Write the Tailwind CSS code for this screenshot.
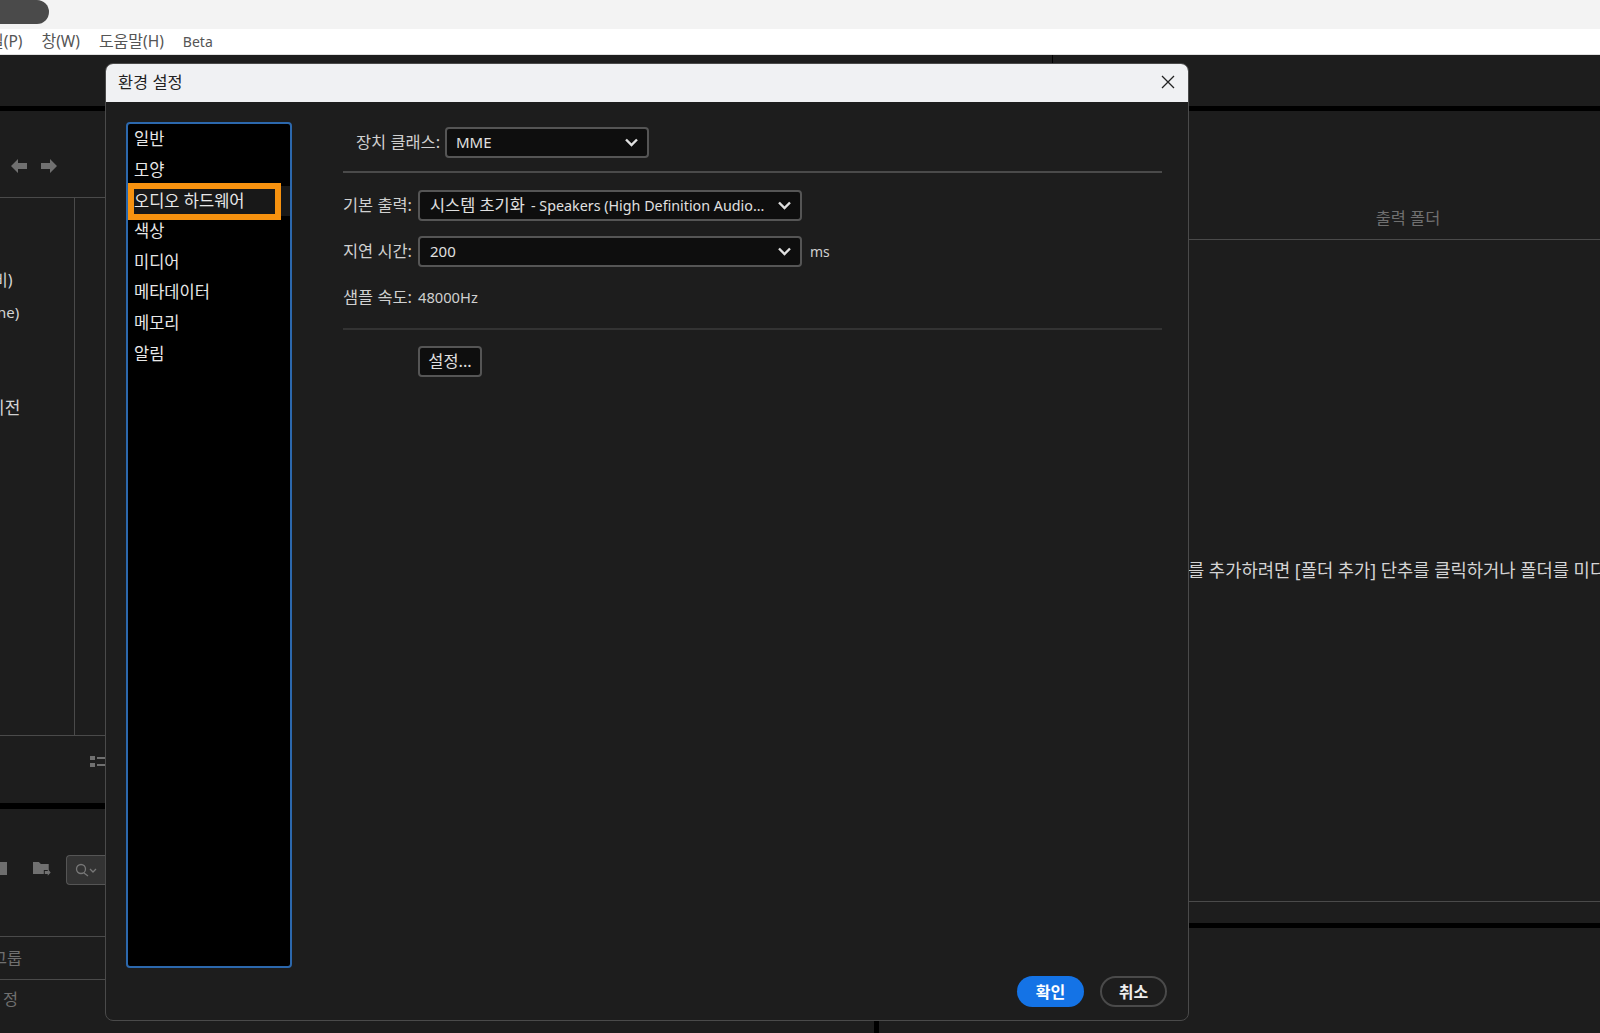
<!DOCTYPE html>
<html lang="ko">
  <head>
    <meta charset="UTF-8" />
    <script src="https://cdn.jsdelivr.net/npm/@tailwindcss/browser@4"></script>
    <title>환경 설정</title>
  </head>
  <body class="relative w-[1600px] h-[1033px] overflow-hidden bg-[#1d1d1d] font-['Noto_Sans','Noto_Sans_CJK_KR',sans-serif] text-[16.4px]">
    <!-- window chrome -->
    <div class="h-[29px] bg-[#f3f3f3]">
      <div class="w-[49px] h-[24px] rounded-r-[12px] bg-[#4a4a4a]"></div>
    </div>
    <div class="h-[26px] bg-white border-b border-[#e0e0e0] flex items-center gap-[19px] text-[16px] text-[#555] overflow-hidden whitespace-nowrap">
      <span class="ml-[-11px]">일<span class="text-[15.5px]">(P)</span></span>
      <span>창<span class="text-[15.5px]">(W)</span></span>
      <span>도움말<span class="text-[15.5px]">(H)</span></span>
      <span class="text-[14px]">Beta</span>
    </div>

    <!-- workspace behind the dialog -->
    <div class="flex h-[978px]">
      <div class="w-[106px] flex flex-col text-[#d4d4d4]">
        <div class="h-[51px]"></div>
        <div class="h-[5px] bg-black"></div>
        <div class="h-[87px] border-b border-[#4a4a4a] flex items-center gap-[14px] pl-[11px] pt-[24px]">
          <svg class="w-[16px] h-[14px]" viewBox="0 0 16 14"><path d="M0 7 7 0v4h9v6H7v4z" fill="#707070" /></svg>
          <svg class="w-[16px] h-[14px]" viewBox="0 0 16 14"><path d="M16 7 9 0v4H0v6h9v4z" fill="#707070" /></svg>
        </div>
        <div class="h-[538px] flex border-b border-[#4a4a4a]">
          <div class="w-[75px] border-r border-[#4a4a4a] overflow-hidden whitespace-nowrap flex flex-col pt-[65px] text-[16px]">
            <div class="h-[33px] flex items-center ml-[-7px]">비)</div>
            <div class="h-[33px] flex items-center text-[15px] ml-[-3px]">ne)</div>
            <div class="h-[33px] mt-[62px] flex items-center text-[17px] ml-[-11px]">이전</div>
          </div>
        </div>
        <div class="h-[67px] flex justify-end pt-[19px] overflow-hidden">
          <svg class="w-[16px] h-[14px] shrink-0" viewBox="0 0 16 14" fill="#707070">
            <rect x="0" y="1" width="5" height="4" /><rect x="0" y="8" width="5" height="4" />
            <rect x="7" y="2" width="9" height="2" /><rect x="7" y="9" width="9" height="2" />
          </svg>
        </div>
        <div class="h-[6px] bg-black"></div>
        <div class="h-[128px] border-b border-[#4a4a4a] flex items-start pt-[46px]">
          <div class="w-[7px] h-[13px] mt-[7px] bg-[#6e6e6e]"></div>
          <svg class="w-[18px] h-[15px] ml-[26px] mt-[6px]" viewBox="0 0 18 15" fill="#707070">
            <path d="M0 1h6l2 2h8v6h-5v4H0z" /><path d="M12 10h3V8l3 3.500-3 3.500v-2h-3z" />
          </svg>
          <div class="ml-[15px] w-[41px] h-[30px] rounded-l-[4px] border border-r-0 border-[#555] bg-[#333] flex items-center pl-[8px]">
            <svg class="w-[24px] h-[14px]" viewBox="0 0 24 14" fill="none" stroke="#777" stroke-width="1.3">
              <circle cx="6" cy="6" r="4.500" /><path d="m9 10 4 3M15 6l3 3 3-3" />
            </svg>
          </div>
        </div>
        <div class="h-[43px] border-b border-[#4a4a4a] overflow-hidden whitespace-nowrap flex items-center text-[#707070]">
          <span class="ml-[-8px]">그룹</span>
        </div>
        <div class="h-[38px] overflow-hidden flex items-center text-[#707070]">
          <span class="ml-[3px]">정</span>
        </div>
      </div>
      <div class="flex-1 flex flex-col justify-between">
        <div class="ml-[946px] w-px h-[9px] bg-black"></div>
        <div class="ml-[768px] w-[5px] h-[13px] bg-black"></div>
      </div>
      <div class="w-[422px] flex flex-col">
        <div class="h-[51px]"></div>
        <div class="h-[5px] bg-black"></div>
        <div class="h-[129px] border-b border-[#4a4a4a] flex items-end justify-center pb-[8px] text-[#707070]">
          <span class="ml-[38px]">출력 폴더</span>
        </div>
        <div class="h-[662px] border-b border-[#4a4a4a] flex items-center overflow-hidden pl-[10px] text-[#d4d4d4] text-[17.7px] whitespace-nowrap">
          를 추가하려면 [폴더 추가] 단추를 클릭하거나 폴더를 미디어 브라우저에서 끌어 놓으십시오.
        </div>
        <div class="h-[21px]"></div>
        <div class="h-[5px] bg-black"></div>
      </div>
    </div>

    <!-- dialog -->
    <div class="absolute left-[105px] top-[63px] w-[1084px] h-[958px] rounded-[8px] border border-[#4a4a4a] bg-[#1d1d1d] flex flex-col overflow-hidden">
      <div class="h-[38px] bg-[#f0f1f3] flex items-center justify-between pl-[12px] pr-[13px] pb-[2px] text-[#222]">
        <span>환경 설정</span>
        <svg class="w-[14px] h-[14px]" viewBox="0 0 14 14" fill="none" stroke="#222" stroke-width="1.3"><path d="m1 1 12 12M13 1 1 13" /></svg>
      </div>
      <div class="flex flex-1 min-h-0">
        <div class="ml-[20px] mt-[20px] w-[166px] h-[846px] rounded-[4px] border-2 border-[#2c68ad] bg-black pt-[0.5px] text-[16.5px] text-[#e8e8e8] flex flex-col overflow-hidden">
          <div class="h-[30.6px] pl-[6px] flex items-center">일반</div>
          <div class="h-[30.6px] pl-[6px] flex items-center">모양</div>
          <div class="h-[30.6px] pl-[6px] flex items-center relative bg-[#181818]">
            오디오 하드웨어
            <div class="absolute left-0 top-[-3px] w-[153px] h-[37px] border-[6px] border-[#f7920f]"></div>
          </div>
          <div class="h-[30.6px] pl-[6px] flex items-center">색상</div>
          <div class="h-[30.6px] pl-[6px] flex items-center">미디어</div>
          <div class="h-[30.6px] pl-[6px] flex items-center">메타데이터</div>
          <div class="h-[30.6px] pl-[6px] flex items-center">메모리</div>
          <div class="h-[30.6px] pl-[6px] flex items-center">알림</div>
        </div>
        <div class="ml-[51px] mr-[26px] flex-1 pt-[25px] text-[#d0d0d0]">
          <div class="flex items-center pb-[13px] border-b-2 border-[#4a4a4a]">
            <span class="ml-[13px] w-[89px] whitespace-nowrap">장치 클래스:</span>
            <div class="w-[204px] h-[31px] rounded-[4px] border-2 border-[#555] bg-[#0e0e0e] flex items-center justify-between pl-[9px] pr-[9px] text-[15px] text-[#e0e0e0]">
              <span>MME</span>
              <svg class="w-[13px] h-[9px]" viewBox="0 0 13 9" fill="none" stroke="#e0e0e0" stroke-width="2.400"><path d="m1 1.500 5.500 5.500 5.500-5.500" /></svg>
            </div>
          </div>
          <div class="flex items-center mt-[17px]">
            <span class="w-[75px] whitespace-nowrap">기본 출력:</span>
            <div class="w-[384px] h-[31px] rounded-[4px] border-2 border-[#555] bg-[#0e0e0e] flex items-center justify-between pl-[10px] pr-[9px] text-[#e0e0e0] whitespace-nowrap">
              <span>시스템 초기화 <span class="ml-[2px] text-[14.3px]">- Speakers (High Definition Audio...</span></span>
              <svg class="w-[13px] h-[9px]" viewBox="0 0 13 9" fill="none" stroke="#e0e0e0" stroke-width="2.400"><path d="m1 1.500 5.500 5.500 5.500-5.500" /></svg>
            </div>
          </div>
          <div class="flex items-center mt-[15px]">
            <span class="w-[75px] whitespace-nowrap">지연 시간:</span>
            <div class="w-[384px] h-[31px] rounded-[4px] border-2 border-[#555] bg-[#0e0e0e] flex items-center justify-between pl-[10px] pr-[9px] text-[15px] text-[#e0e0e0]">
              <span>200</span>
              <svg class="w-[13px] h-[9px]" viewBox="0 0 13 9" fill="none" stroke="#e0e0e0" stroke-width="2.400"><path d="m1 1.500 5.500 5.500 5.500-5.500" /></svg>
            </div>
            <span class="ml-[8px] text-[14px]">ms</span>
          </div>
          <div class="flex items-center mt-[18px] pb-[18px] border-b-2 border-[#333]">
            <span class="w-[75px] whitespace-nowrap">샘플 속도:</span>
            <span class="text-[14.7px]">48000Hz</span>
          </div>
          <div class="ml-[75px] mt-[16px] w-[64px] h-[31px] rounded-[4px] border-2 border-[#555] bg-[#0e0e0e] flex items-center justify-center text-[#e0e0e0]">설정...</div>
        </div>
      </div>
      <div class="absolute right-[21px] bottom-[13px] flex gap-[16px] text-[16px] font-bold">
        <div class="w-[67px] h-[31px] rounded-full bg-[#1473e6] text-white flex items-center justify-center">확인</div>
        <div class="w-[67px] h-[31px] rounded-full border-2 border-[#4a4a4a] text-[#eee] flex items-center justify-center">취소</div>
      </div>
    </div>
  </body>
</html>
